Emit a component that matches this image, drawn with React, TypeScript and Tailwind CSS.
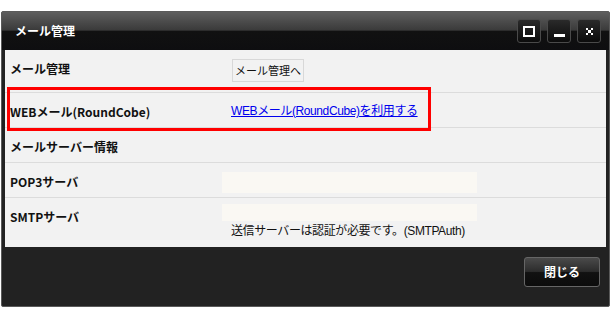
const font = { fontFamily: '"Noto Sans CJK JP", "Liberation Sans", sans-serif' };
const thin = { fontFamily: '"Liberation Sans", "Noto Sans CJK JP", sans-serif' };

const Row = ({ label, children, h }: { label: string; children?: React.ReactNode; h: string }) => (
  <div className={`flex border-b border-[#dcdcdc] ${h}`}>
    <div className="w-[217px] shrink-0 pl-[5px] pt-[10px] text-[12px] font-bold text-[#111]">{label}</div>
    <div className="flex-1">{children}</div>
  </div>
);

const TitleBtn = ({ children }: { children: React.ReactNode }) => (
  <div className="flex h-[24px] w-[24px] items-center justify-center rounded-[3px] border border-[#4a4a4a] bg-gradient-to-b from-[#2a2a2a] to-[#0c0c0c]">
    {children}
  </div>
);

const App = () => {
  return (
    <div className="h-[320px] w-[610px] bg-white pt-[11px] pl-[1px]" style={font}>
      <div className="flex h-[296px] w-[609px] flex-col rounded-[2px] border border-[#5a5a5a] bg-[#222]">
        <div className="flex h-[38px] items-center justify-between bg-[linear-gradient(#5e5e5e_0%,#3a3a3a_48%,#111_50%,#0e0e10_100%)] pr-[8px] pl-[13px]">
          <span className="text-[12px] font-bold text-white">メール管理</span>
          <div className="flex gap-[6px]">
            <TitleBtn>
              <div className="h-[11px] w-[12px] border-2 border-white" />
            </TitleBtn>
            <TitleBtn>
              <div className="mt-[8px] h-[3px] w-[11px] bg-white" />
            </TitleBtn>
            <TitleBtn>
              <svg width="7" height="7" viewBox="0 0 7 7" shapeRendering="crispEdges">
                <path d="M0 0h2v2H0zM5 0h2v2H5zM2 2h3v3H2zM0 5h2v2H0zM5 5h2v2H5z" fill="#fff" />
              </svg>
            </TitleBtn>
          </div>
        </div>
        <div className="mx-[3px] flex flex-col bg-[#f2f2f2]">
          <Row label="メール管理" h="h-[43px]">
            <button className="mt-[9px] ml-[10px] h-[23px] border border-[#d8d8d8] bg-[#f2f2f2] px-[2px] text-[11px] text-[#111]">
              メール管理へ
            </button>
          </Row>
          <div className="relative">
            <Row label="WEBメール(RoundCobe)" h="h-[35px]">
              <a href="#" style={thin} className="mt-[9px] ml-[9px] inline-block text-[12px] tracking-[-0.4px] text-[#0000ee] underline">
                WEBメール(RoundCube)を利用する
              </a>
            </Row>
            <div className="absolute top-[-6px] left-[2px] h-[44px] w-[424px] border-[3px] border-[#ff0000]" />
          </div>
          <Row label="メールサーバー情報" h="h-[35px]" />
          <Row label="POP3サーバ" h="h-[35px]">
            <div className="mt-[9px] h-[21px] w-[255px] bg-[#faf8f3]" />
          </Row>
          <div className="flex h-[49px]">
            <div className="w-[217px] shrink-0 pl-[5px] pt-[10px] text-[12px] font-bold text-[#111]">SMTPサーバ</div>
            <div className="flex-1 pt-[6px]">
              <div className="h-[17px] w-[255px] bg-[#faf8f3]" />
              <div style={thin} className="mt-[1px] pl-[9px] text-[12px] tracking-[-0.4px] text-[#111]">
                送信サーバーは認証が必要です。(SMTPAuth)
              </div>
            </div>
          </div>
        </div>
        <div className="flex flex-1 justify-end pt-[10px] pr-[9px]">
          <button className="h-[30px] w-[76px] rounded-[3px] border border-[#666] bg-[linear-gradient(#4a4a4a_0%,#2c2c2c_48%,#111_52%,#0c0c0c_100%)] text-[12px] font-bold text-white">
            閉じる
          </button>
        </div>
      </div>
    </div>
  );
};

export default App;
